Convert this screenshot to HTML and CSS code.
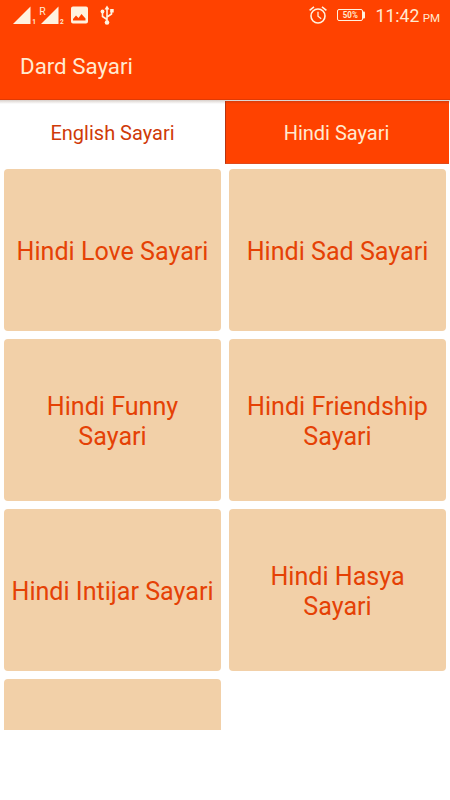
FILE: index.html
```html
<!DOCTYPE html>
<html lang="en">
<head>
<meta charset="utf-8">
<title>Dard Sayari</title>
<link rel="stylesheet" href="styles.css">
</head>
<body>
<header class="app-header">
  <div class="status-bar">
    <svg class="status-left" width="130" height="30" viewBox="0 0 130 30">
      <path class="fill" d="M13 24 30.500 6.500V24zM41 24 58.500 6.500V24z"/>
      <text class="sim" x="32.300" y="23.500">1</text>
      <text class="sim" x="60" y="23.500">2</text>
      <text class="roaming" x="39.300" y="14.500">R</text>
      <path class="fill" fill-rule="evenodd" d="M73 6.500h13q2 0 2 2v13q0 2-2 2H73q-2 0-2-2v-13q0-2 2-2zM73 20.500h12.500v-2L81.500 14l-3 4-2.500-2.500-3 3.500z"/>
      <path class="line" d="M107 9v12M107 19.500l-4.500-3v-4M107 17l4.500-3v-3"/>
      <path class="fill" d="M107 5.500l2.500 4h-5zM110.200 9h3.500v3.500h-3.500z"/>
      <circle class="fill" cx="102.500" cy="11.500" r="1.900"/>
      <circle class="fill" cx="107" cy="22.500" r="2.300"/>
    </svg>
    <div class="status-right">
      <svg width="20" height="20" viewBox="0 0 20 20">
        <circle class="line" cx="10" cy="11" r="7"/>
        <path class="line" d="M1.600 5.400 6 1.900M14 1.900l4.400 3.500"/>
        <path class="line thin" d="M10 6.700v4.500l3.200 2.500"/>
      </svg>
      <svg width="29" height="16" viewBox="0 0 29 16">
        <rect class="line hairline" x=".5" y="2.500" width="25" height="11" rx="1.500"/>
        <path class="fill" d="M25.500 4.500h1.500q1 0 1 1v5q0 1-1 1h-1.500z"/>
        <text class="percent" x="13.300" y="11" textLength="15" lengthAdjust="spacingAndGlyphs">50%</text>
      </svg>
      <span class="clock">11:42 <small>PM</small></span>
    </div>
  </div>
  <h1 class="title">Dard Sayari</h1>
</header>
<nav class="tabs">
  <div class="tab">English Sayari</div>
  <div class="tab active">Hindi Sayari</div>
</nav>
<main class="cards">
  <div class="card">Hindi Love Sayari</div>
  <div class="card">Hindi Sad Sayari</div>
  <div class="card">Hindi Funny<br>Sayari</div>
  <div class="card">Hindi Friendship<br>Sayari</div>
  <div class="card">Hindi Intijar Sayari</div>
  <div class="card">Hindi Hasya<br>Sayari</div>
  <div class="card"></div>
</main>
</body>
</html>
```
FILE: styles.css
```css
* { box-sizing: border-box; }
body {
  margin: 0;
  width: 450px;
  height: 800px;
  overflow: hidden;
  background: #fff;
  font-family: Roboto, sans-serif;
}
.app-header {
  height: 100px;
  background: #ff4200;
  border-bottom: 1px solid #e03a05;
  color: #ffead0;
}
.status-bar {
  display: flex;
  justify-content: space-between;
  height: 30px;
}
.status-right {
  display: flex;
  align-items: center;
  padding-right: 10px;
}
.status-right svg + svg { margin-left: 9px; }
.fill { fill: #fff2df; }
.line { fill: none; stroke: #fff2df; stroke-width: 1.6; }
.thin { stroke-width: 1.3; }
.hairline { stroke-width: 1; }
.sim { font-size: 6.5px; font-weight: 700; fill: #ffead0; }
.roaming { font-size: 10.5px; fill: #ffead0; }
.percent { font-size: 9px; font-weight: 700; fill: #ffead0; text-anchor: middle; }
.clock {
  margin-left: 10px;
  padding-top: 3px;
  font-size: 17.6px;
  line-height: 30px;
  white-space: nowrap;
}
.clock small { font-size: 11.5px; margin-left: -1px; }
.title {
  margin: 20px 0 0 20px;
  font-size: 22.3px;
  font-weight: 400;
  line-height: 33px;
}
.tabs {
  display: grid;
  grid-template-columns: 225px 224px;
  height: 64px;
  padding-top: 1px;
  background: linear-gradient(#d8d0cb, #fff 4px);
}
.tab {
  display: flex;
  align-items: center;
  justify-content: center;
  color: #cf3a08;
  font-size: 20px;
}
.active {
  padding: 1px 2px 0 0;
  background: linear-gradient(#d93c0a, #ff4200 3px);
  border-left: 1px solid #b53510;
  border-bottom: 1px solid #e04a1c;
  color: #ffead0;
}
.cards {
  display: grid;
  grid-template-columns: 217px 217px;
  grid-auto-rows: 162px;
  gap: 8px;
  height: 566px;
  padding: 5px 4px 0;
  overflow: hidden;
}
.card {
  display: flex;
  align-items: center;
  justify-content: center;
  padding-top: 3px;
  border-radius: 4px;
  background: #f2d0a8;
  color: #e54105;
  font-size: 25.1px;
  line-height: 29.5px;
  text-align: center;
}
```
